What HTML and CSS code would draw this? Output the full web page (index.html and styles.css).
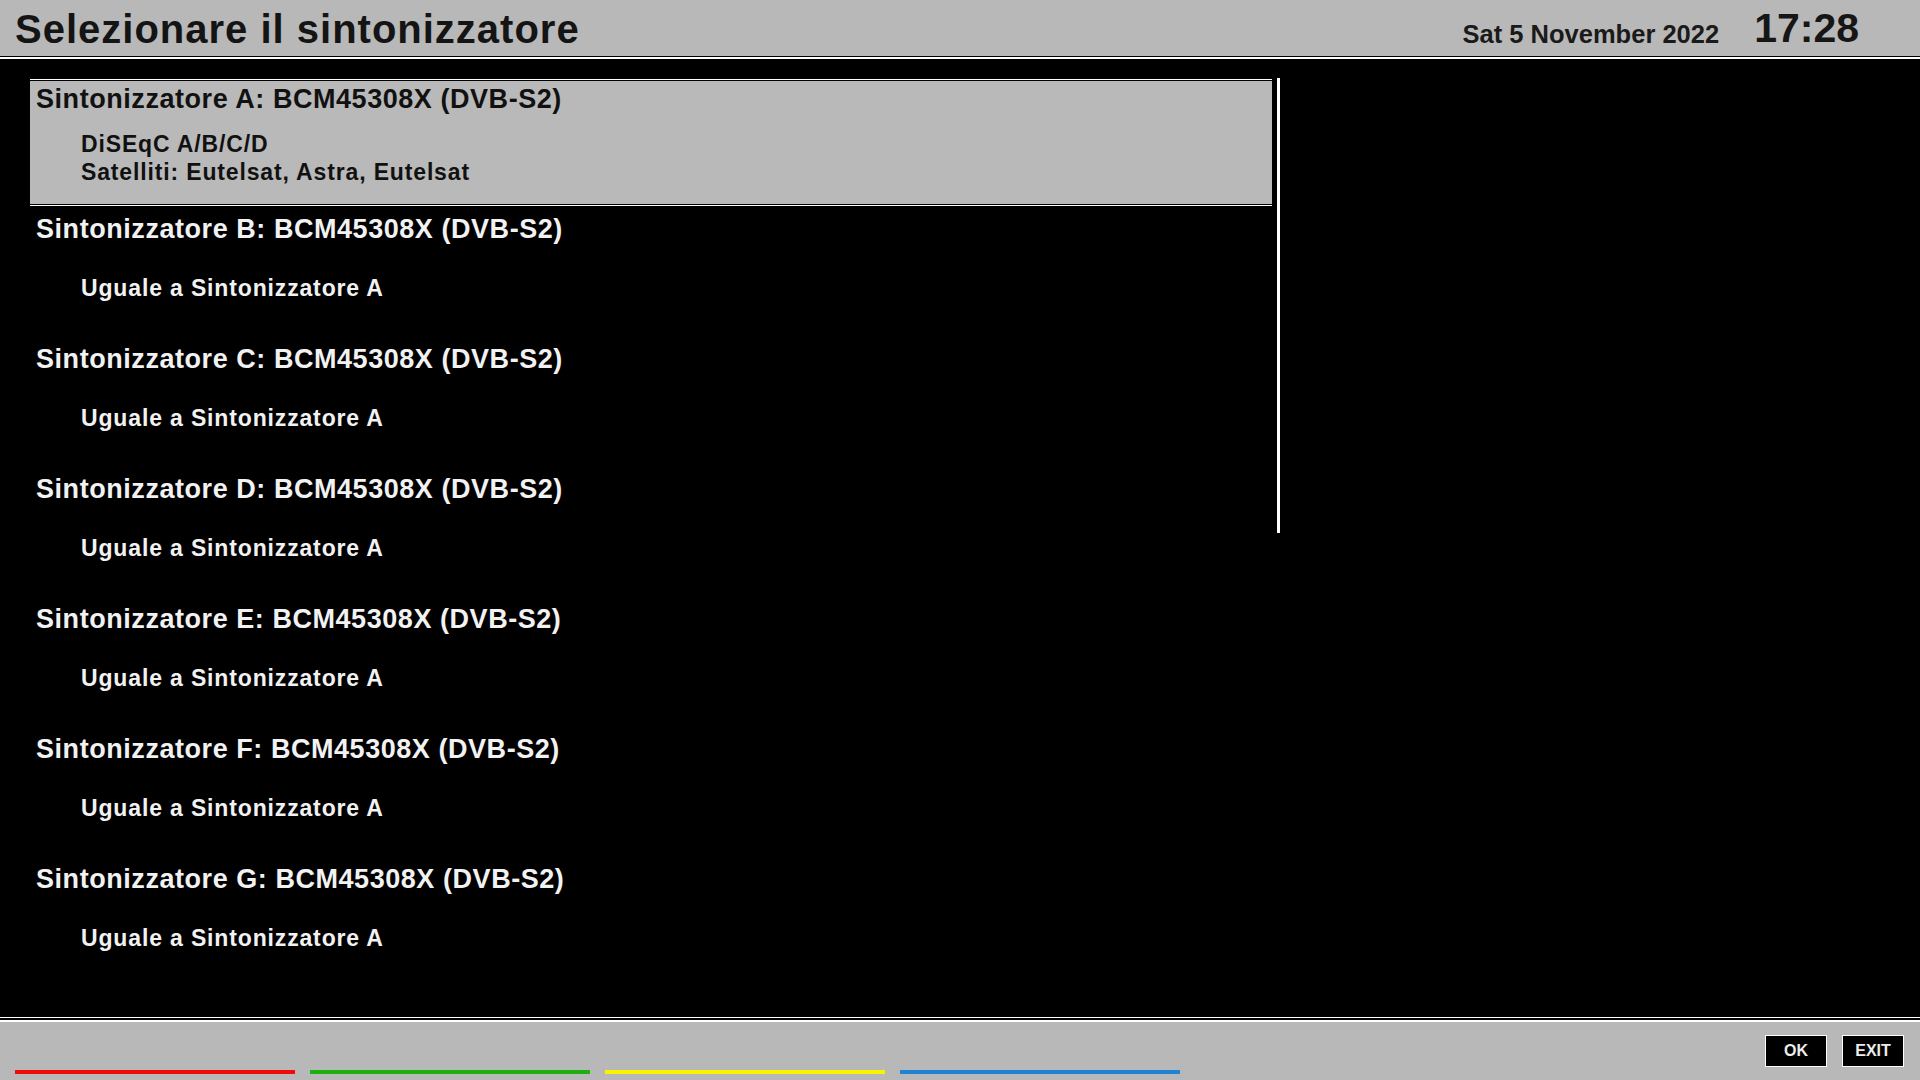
FILE: index.html
```html
<!DOCTYPE html>
<html lang="it">
<head>
<meta charset="utf-8">
<title>Selezionare il sintonizzatore</title>
<link rel="stylesheet" href="styles.css">
</head>
<body>
<div class="screen">
  <header class="header">
    <h1 class="title">Selezionare il sintonizzatore</h1>
    <div class="date">Sat 5 November 2022</div>
    <div class="time">17:28</div>
  </header>
  <div class="rule-top"></div>
  <main class="main">
    <div class="list">
      <div class="row">
        <div class="cell sel">
          <div class="head">Sintonizzatore A: BCM45308X (DVB-S2)</div>
          <div class="sub"><div>DiSEqC A/B/C/D</div><div>Satelliti: Eutelsat, Astra, Eutelsat</div></div>
        </div>
      </div>
      <div class="row">
        <div class="cell">
          <div class="head">Sintonizzatore B: BCM45308X (DVB-S2)</div>
          <div class="sub"><div>Uguale a Sintonizzatore A</div></div>
        </div>
      </div>
      <div class="row">
        <div class="cell">
          <div class="head">Sintonizzatore C: BCM45308X (DVB-S2)</div>
          <div class="sub"><div>Uguale a Sintonizzatore A</div></div>
        </div>
      </div>
      <div class="row">
        <div class="cell">
          <div class="head">Sintonizzatore D: BCM45308X (DVB-S2)</div>
          <div class="sub"><div>Uguale a Sintonizzatore A</div></div>
        </div>
      </div>
      <div class="row">
        <div class="cell">
          <div class="head">Sintonizzatore E: BCM45308X (DVB-S2)</div>
          <div class="sub"><div>Uguale a Sintonizzatore A</div></div>
        </div>
      </div>
      <div class="row">
        <div class="cell">
          <div class="head">Sintonizzatore F: BCM45308X (DVB-S2)</div>
          <div class="sub"><div>Uguale a Sintonizzatore A</div></div>
        </div>
      </div>
      <div class="row">
        <div class="cell">
          <div class="head">Sintonizzatore G: BCM45308X (DVB-S2)</div>
          <div class="sub"><div>Uguale a Sintonizzatore A</div></div>
        </div>
      </div>
    </div>
    <div class="scrollbar"></div>
  </main>
  <div class="rule-bottom"></div>
  <footer class="footer">
    <div class="bars">
      <span class="bar red"></span>
      <span class="bar green"></span>
      <span class="bar yellow"></span>
      <span class="bar blue"></span>
    </div>
    <div class="keys">
      <span class="key">OK</span>
      <span class="key">EXIT</span>
    </div>
  </footer>
</div>
</body>
</html>
```
FILE: styles.css
```css
html, body {
  margin: 0;
  padding: 0;
  background: #000;
}

.screen {
  width: 1920px;
  height: 1080px;
  overflow: hidden;
  display: flex;
  flex-direction: column;
  font-family: "Liberation Sans", Arial, sans-serif;
  font-weight: bold;
  background: #000;
}

.header {
  height: 56px;
  box-sizing: border-box;
  background: #b8b8b8;
  display: flex;
  align-items: baseline;
  padding: 6px 61px 0 15px;
  flex: none;
}

.title {
  margin: 0;
  font-size: 40px;
  line-height: 46px;
  letter-spacing: 1px;
  color: #141414;
  font-weight: bold;
  flex: 1;
}

.date {
  font-size: 25.5px;
  line-height: 30px;
  color: #1a1a1a;
  margin-right: 35px;
}

.time {
  font-size: 41px;
  line-height: 46px;
  color: #161616;
  position: relative;
  top: -1px;
}

.rule-top {
  height: 3px;
  box-sizing: border-box;
  border-top: 1px solid #000;
  background: #fff;
  flex: none;
}

.main {
  height: 958px;
  box-sizing: border-box;
  padding: 20px 0 0 30px;
  display: flex;
  align-items: flex-start;
  gap: 5px;
  flex: none;
}

.list {
  width: 1242px;
  display: flex;
  flex-direction: column;
}

.row {
  height: 130px;
}

.cell {
  height: 127px;
  box-sizing: border-box;
  border-top: 1px solid transparent;
  border-bottom: 1px solid transparent;
  padding: 1px 0;
  background-clip: content-box;
  display: flex;
  flex-direction: column;
  color: #f2f2f2;
}

.cell.sel {
  border-color: #fff;
  background-color: #b9b9b9;
  color: #111;
}

.head {
  margin-top: 1px;
  padding-left: 6px;
  font-size: 27px;
  line-height: 34px;
  letter-spacing: 0.55px;
  white-space: nowrap;
}

.sub {
  flex: 1;
  display: flex;
  flex-direction: column;
  justify-content: center;
  padding: 0 0 5px 51px;
  font-size: 23px;
  line-height: 28px;
  letter-spacing: 0.85px;
  white-space: nowrap;
}

.scrollbar {
  width: 3px;
  height: 455px;
  margin-top: -1px;
  background: #fff;
}

.rule-bottom {
  height: 5px;
  box-sizing: border-box;
  border-top: 1px solid #fff;
  border-bottom: 2px solid #fff;
  background: #000;
  flex: none;
}

.footer {
  flex: 1;
  background: #b8b8b8;
  display: flex;
  justify-content: space-between;
  padding: 0 16px 0 15px;
}

.bars {
  align-self: flex-end;
  margin-bottom: 6px;
  display: flex;
  gap: 15px;
}

.bar {
  display: block;
  width: 280px;
  height: 4px;
}

.red { background: #f00a0a; }
.green { background: #19b010; }
.yellow { background: #f8f400; }
.blue { background: #1b84d4; }

.keys {
  align-self: flex-start;
  margin-top: 13px;
  display: flex;
  gap: 15px;
}

.key {
  width: 62px;
  height: 32px;
  box-sizing: border-box;
  border: 1px solid #fff;
  background: #000;
  color: #ececec;
  font-size: 16px;
  display: flex;
  align-items: center;
  justify-content: center;
}
```
